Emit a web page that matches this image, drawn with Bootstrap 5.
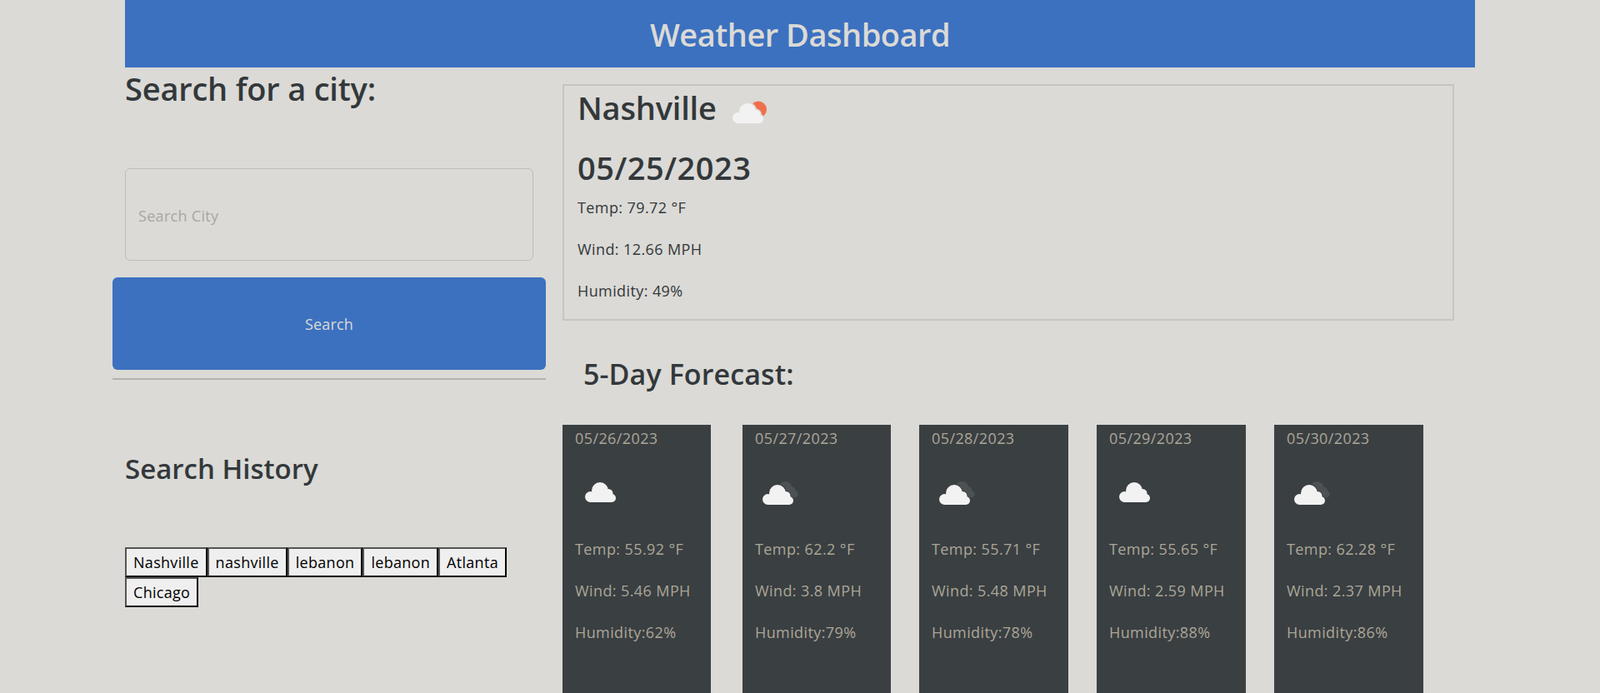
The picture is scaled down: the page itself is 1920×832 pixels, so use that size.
<!DOCTYPE html>
<html lang="en">
<head>
  <meta charset="UTF-8">
  <title>Weather Dashboard</title>
  <meta name="viewport" content="width=device-width, initial-scale=1">
  <link href="https://cdn.jsdelivr.net/npm/bootstrap@5.3.0/dist/css/bootstrap.min.css" rel="stylesheet">
  <style>
    html, body { overflow: hidden; height: 832px; }
    body { background: #dbdad6; color: #33383b; font-family: "Open Sans", "Liberation Sans", sans-serif; }
    .page-wrap { width: 1620px; margin: 0 auto; }
    .top-bar { background: #3c71c0; color: #dbdad6; height: 81px; line-height: 83px; font-size: 38px; font-weight: 600; text-align: center; letter-spacing: -0.5px; }
    .left-side { width: 540px; margin-left: -15px; padding-right: 20px; flex: none; }
    .left-title { font-size: 38px; font-weight: 600; line-height: 48px; margin: 1px 0 0 15px; letter-spacing: -0.2px; }
    .city-input { display: block; width: 490px; height: 111px; margin: 72px 0 20px 15px; padding: 3px 0 0 15px; background: transparent; border: 1px solid #bdbcb8; color: #33383b; font-size: 18px; letter-spacing: .3px; }
    .city-input:focus { background: transparent; box-shadow: none; border-color: #bdbcb8; }
    .city-input::placeholder { color: #a8a7a3; }
    .search-btn { display: block; width: 520px; height: 111px; padding-top: 8px; background: #3c71c0; border: 0; color: #dbdad6; font-size: 18px; letter-spacing: .2px; }
    .side-rule { width: 520px; height: 2px; margin: 10px 0 0; background: #b3b2ae; opacity: 1; border: 0; }
    .hist-title { font-size: 33px; font-weight: 600; line-height: 42px; margin: 86px 0 73px 15px; }
    .hist-list { margin-left: 15px; width: 490px; }
    .hist-list button { font-size: 18px; line-height: 26px; padding: 3px 8px; color: #000; letter-spacing: .3px; }
    .now-box { width: 1070px; height: 284px; margin-top: 20px; border: 2px solid #c6c5c1; padding: 2px 16px 0; border-radius: 0; background: transparent; color: inherit; }
    .now-city { font-size: 38px; font-weight: 600; line-height: 48px; margin: 0; letter-spacing: -0.2px; }
    .now-city svg { margin-left: 9px; vertical-align: -5px; }
    .now-date { font-size: 38px; font-weight: 600; line-height: 48px; margin: 24px 0 11px; letter-spacing: .5px; }
    .now-box p, .day-box p { font-size: 18px; line-height: 27px; margin: 0 0 23px; letter-spacing: .4px; }
    .fc-title { font-size: 34px; font-weight: 600; line-height: 40px; margin: 44px 0 41px 25px; letter-spacing: .1px; }
    .day-box { width: 179px; height: 400px; background: #3a3f42; color: #aba697; padding: 3px 15px 0; flex: none; }
    .day-box:nth-child(-n+2) { width: 178px; }
    .day-box .day-date { margin-bottom: 0; }
    .day-icon { display: block; height: 106px; padding-top: 37px; }
    .gap-a { margin-right: 38px; }
    .gap-b { margin-right: 34px; }
  </style>
</head>
<body>

<svg width="0" height="0" class="position-absolute">
  <defs>
    <g id="cloudShape">
      <circle cx="18" cy="10" r="10"/>
      <circle cx="28" cy="13.5" r="5.5"/>
      <circle cx="6.5" cy="17.5" r="6.5"/>
      <circle cx="32" cy="19" r="5"/>
      <rect x="6" y="12" width="26" height="12"/>
    </g>
  </defs>
</svg>

<div class="page-wrap">
  <div class="top-bar">Weather Dashboard</div>

  <div class="d-flex">
    <!-- search side -->
    <div class="left-side">
      <h2 class="left-title">Search for a city:</h2>
      <input class="form-control city-input" type="text" placeholder="Search City">
      <button class="btn search-btn" type="button">Search</button>
      <hr class="side-rule">
      <h3 class="hist-title">Search History</h3>
      <div class="hist-list d-flex flex-wrap">
        <button type="button">Nashville</button>
        <button type="button">nashville</button>
        <button type="button">lebanon</button>
        <button type="button">lebanon</button>
        <button type="button">Atlanta</button>
        <button type="button">Chicago</button>
      </div>
    </div>

    <!-- weather side -->
    <div class="flex-grow-1">
      <div class="card now-box">
        <h2 class="now-city">Nashville
          <svg width="43" height="28" viewBox="0 0 43 28">
            <circle cx="32" cy="10.5" r="10" fill="#f0704c"/>
            <use href="#cloudShape" transform="translate(1 3)" fill="#dbdad6" stroke="#dbdad6" stroke-width="3"/>
            <use href="#cloudShape" transform="translate(1 3)" fill="#f2f2f2"/>
          </svg>
        </h2>
        <h2 class="now-date">05/25/2023</h2>
        <p>Temp: 79.72 °F</p>
        <p>Wind: 12.66 MPH</p>
        <p>Humidity: 49%</p>
      </div>

      <h3 class="fc-title">5-Day Forecast:</h3>

      <div class="d-flex">
        <div class="day-box gap-a">
          <p class="day-date">05/26/2023</p>
          <span class="day-icon">
            <svg width="44" height="30" viewBox="0 0 44 30" class="ms-2"><use href="#cloudShape" transform="translate(4 2)" fill="#f2f2f2"/></svg>
          </span>
          <p>Temp: 55.92 °F</p>
          <p>Wind: 5.46 MPH</p>
          <p>Humidity:62%</p>
        </div>
        <div class="day-box gap-b">
          <p class="day-date">05/27/2023</p>
          <span class="day-icon">
            <svg width="50" height="30" viewBox="0 0 50 30" class="ms-2">
              <use href="#cloudShape" transform="translate(14 1) scale(.8)" fill="#4d5154"/>
              <use href="#cloudShape" transform="translate(1 5)" fill="#3a3f42" stroke="#3a3f42" stroke-width="2"/>
              <use href="#cloudShape" transform="translate(1 5)" fill="#f2f2f2"/>
            </svg>
          </span>
          <p>Temp: 62.2 °F</p>
          <p>Wind: 3.8 MPH</p>
          <p>Humidity:79%</p>
        </div>
        <div class="day-box gap-b">
          <p class="day-date">05/28/2023</p>
          <span class="day-icon">
            <svg width="50" height="30" viewBox="0 0 50 30" class="ms-2">
              <use href="#cloudShape" transform="translate(14 1) scale(.8)" fill="#4d5154"/>
              <use href="#cloudShape" transform="translate(1 5)" fill="#3a3f42" stroke="#3a3f42" stroke-width="2"/>
              <use href="#cloudShape" transform="translate(1 5)" fill="#f2f2f2"/>
            </svg>
          </span>
          <p>Temp: 55.71 °F</p>
          <p>Wind: 5.48 MPH</p>
          <p>Humidity:78%</p>
        </div>
        <div class="day-box gap-b">
          <p class="day-date">05/29/2023</p>
          <span class="day-icon">
            <svg width="44" height="30" viewBox="0 0 44 30" class="ms-2"><use href="#cloudShape" transform="translate(4 2)" fill="#f2f2f2"/></svg>
          </span>
          <p>Temp: 55.65 °F</p>
          <p>Wind: 2.59 MPH</p>
          <p>Humidity:88%</p>
        </div>
        <div class="day-box">
          <p class="day-date">05/30/2023</p>
          <span class="day-icon">
            <svg width="50" height="30" viewBox="0 0 50 30" class="ms-2">
              <use href="#cloudShape" transform="translate(14 1) scale(.8)" fill="#4d5154"/>
              <use href="#cloudShape" transform="translate(1 5)" fill="#3a3f42" stroke="#3a3f42" stroke-width="2"/>
              <use href="#cloudShape" transform="translate(1 5)" fill="#f2f2f2"/>
            </svg>
          </span>
          <p>Temp: 62.28 °F</p>
          <p>Wind: 2.37 MPH</p>
          <p>Humidity:86%</p>
        </div>
      </div>
    </div>
  </div>
</div>

<script src="https://cdn.jsdelivr.net/npm/bootstrap@5.3.0/dist/js/bootstrap.bundle.min.js"></script>
</body>
</html>
